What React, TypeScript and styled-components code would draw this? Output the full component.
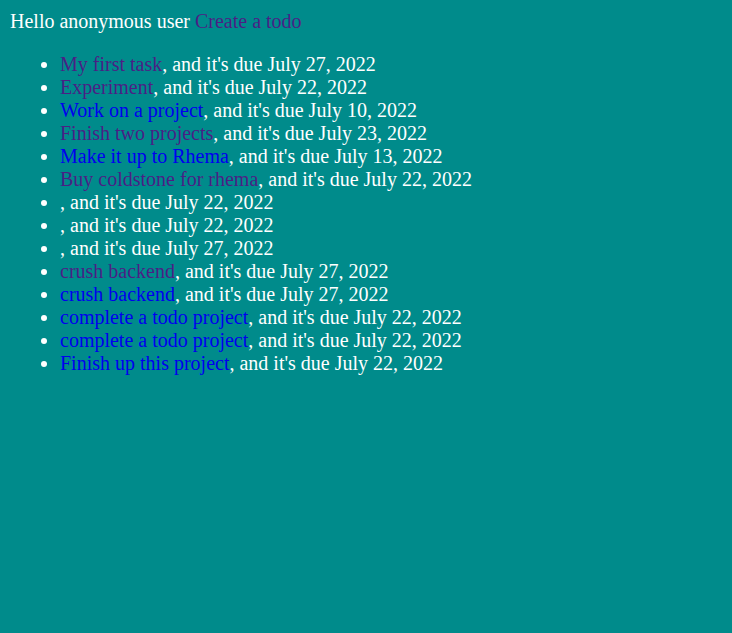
import React from "react";
import styled, { createGlobalStyle } from "styled-components";

const Global = createGlobalStyle`
  html, body { margin: 0; padding: 0; background: #008b8b; }
  body { font-family: "Liberation Serif", "Times New Roman", serif; font-size: 20px; color: #ffffff; }
`;

const Page = styled.div`
  padding: 10px;
  min-height: 633px;
  box-sizing: border-box;
  background: #008b8b;
`;

const Header = styled.div`
  line-height: 23px;
`;

const Link = styled.a<{ $visited?: boolean }>`
  color: ${(p) => (p.$visited ? "#4a1f85" : "#0000ee")};
  text-decoration: none;
  cursor: pointer;
`;

const List = styled.ul`
  margin: 20px 0;
  padding-left: 50px;
  list-style: disc;
`;

const Item = styled.li`
  line-height: 23px;
`;

const todos: { title: string; date: string; visited: boolean }[] = [
  { title: "My first task", date: "July 27, 2022", visited: true },
  { title: "Experiment", date: "July 22, 2022", visited: true },
  { title: "Work on a project", date: "July 10, 2022", visited: false },
  { title: "Finish two projects", date: "July 23, 2022", visited: true },
  { title: "Make it up to Rhema", date: "July 13, 2022", visited: false },
  { title: "Buy coldstone for rhema", date: "July 22, 2022", visited: true },
  { title: "", date: "July 22, 2022", visited: false },
  { title: "", date: "July 22, 2022", visited: false },
  { title: "", date: "July 27, 2022", visited: false },
  { title: "crush backend", date: "July 27, 2022", visited: true },
  { title: "crush backend", date: "July 27, 2022", visited: false },
  { title: "complete a todo project", date: "July 22, 2022", visited: false },
  { title: "complete a todo project", date: "July 22, 2022", visited: false },
  { title: "Finish up this project", date: "July 22, 2022", visited: false },
];

export default function App() {
  return (
    <>
      <Global />
      <Page>
        <Header>
          Hello anonymous user <Link $visited>Create a todo</Link>
        </Header>
        <List>
          {todos.map((t, i) => (
            <Item key={i}>
              <Link $visited={t.visited}>{t.title}</Link>, and it's due {t.date}
            </Item>
          ))}
        </List>
      </Page>
    </>
  );
}
